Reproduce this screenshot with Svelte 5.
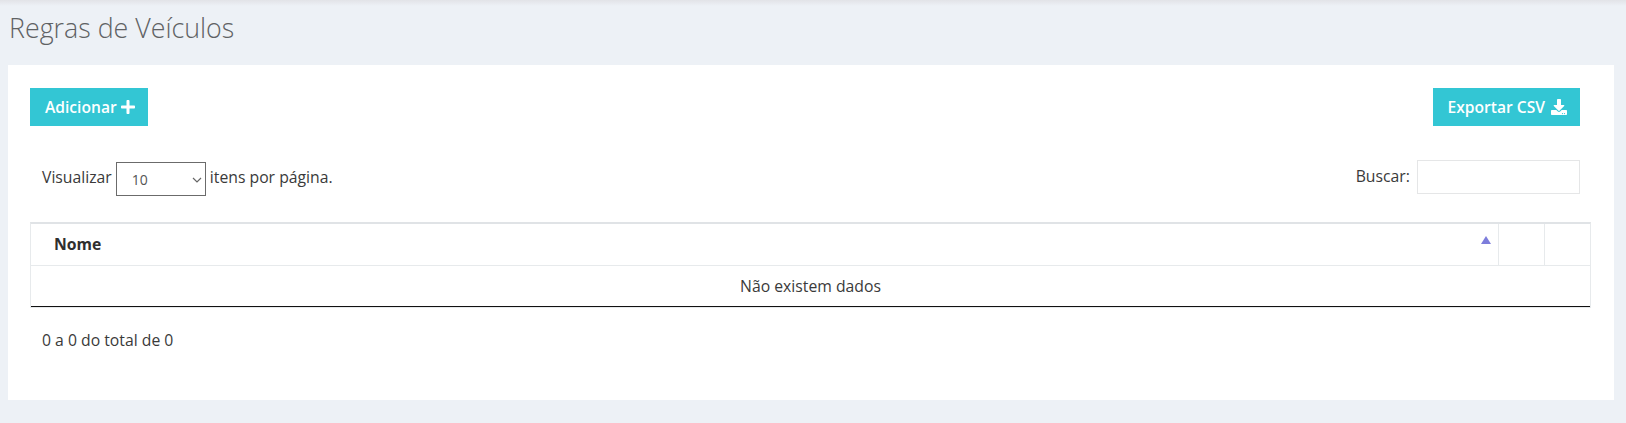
<script>
  let pageSize = $state(10);
  let search = $state("");
</script>

<div class="page">
  <div class="topbar"></div>
  <h1>Regras de Veículos</h1>

  <div class="card">
    <div class="actions">
      <button class="btn">
        Adicionar
        <svg viewBox="0 0 448 512" width="14" height="16"><path fill="currentColor" d="M416 208H272V64c0-17.670-14.330-32-32-32h-32c-17.670 0-32 14.330-32 32v144H32c-17.670 0-32 14.330-32 32v32c0 17.670 14.330 32 32 32h144v144c0 17.670 14.330 32 32 32h32c17.670 0 32-14.330 32-32V304h144c17.670 0 32-14.330 32-32v-32c0-17.670-14.330-32-32-32z"/></svg>
      </button>
      <button class="btn export">
        Exportar CSV
        <svg viewBox="0 0 512 512" width="16" height="16"><path fill="currentColor" d="M216 0h80c13.300 0 24 10.700 24 24v168h87.700c17.800 0 26.700 21.500 14.100 34.100L269.700 378.300c-7.500 7.500-19.800 7.500-27.300 0L90.100 226.100c-12.600-12.600-3.700-34.100 14.100-34.100H192V24c0-13.300 10.700-24 24-24zm296 376v112c0 13.300-10.700 24-24 24H24c-13.300 0-24-10.700-24-24V376c0-13.300 10.700-24 24-24h146.700l49 49c20.100 20.100 52.500 20.100 72.600 0l49-49H488c13.300 0 24 10.700 24 24zm-124 88c0-11-9-20-20-20s-20 9-20 20 9 20 20 20 20-9 20-20zm64 0c0-11-9-20-20-20s-20 9-20 20 9 20 20 20 20-9 20-20z"/></svg>
      </button>
    </div>

    <div class="filters">
      <label class="length">
        Visualizar
        <span class="select-wrap">
          <select bind:value={pageSize}>
            <option value={10}>10</option>
            <option value={25}>25</option>
            <option value={50}>50</option>
          </select>
          <svg class="chevron" viewBox="0 0 10 6" width="10" height="6"><path d="M1 1l4 4 4-4" fill="none" stroke="#666" stroke-width="1.2"/></svg>
        </span>
        itens por página.
      </label>
      <label class="search">
        Buscar:
        <input type="text" bind:value={search} />
      </label>
    </div>

    <table>
      <thead>
        <tr>
          <th class="sorted">Nome</th>
          <th class="narrow"></th>
          <th class="narrow"></th>
        </tr>
      </thead>
      <tbody>
        <tr>
          <td colspan="3">Não existem dados</td>
        </tr>
      </tbody>
    </table>

    <div class="info">0 a 0 do total de 0</div>
  </div>
</div>

<style>
  :global(body) {
    background-color: #edf1f6;
    font-family: "Open Sans", sans-serif;
    color: #3a3a3a;
  }

  .page {
    padding: 0 12px 0 8px;
  }

  .topbar {
    height: 6px;
    margin: 0 -12px 0 -8px;
    background: linear-gradient(#e2e3e7, #edf1f6);
  }

  h1 {
    margin: 0;
    padding: 5px 0 20px 1px;
    height: 34px;
    font-size: 26.8px;
    line-height: 34px;
    font-weight: 300;
    color: #5f6264;
  }

  .card {
    background-color: #fff;
    height: 335px;
    padding: 23px 23px 0 22px;
    box-sizing: border-box;
  }

  .actions {
    display: flex;
    justify-content: space-between;
    padding-right: 11px;
  }

  .btn {
    display: flex;
    align-items: center;
    gap: 4px;
    height: 38px;
    padding: 0 13px 0 15px;
    border: none;
    background-color: #33c6d4;
    color: #fff;
    font-family: inherit;
    font-size: 15.6px;
    font-weight: 600;
  }

  .export {
    gap: 6px;
  }

  .filters {
    display: flex;
    justify-content: space-between;
    align-items: center;
    height: 34px;
    margin-top: 34px;
    padding: 0 11px 0 12px;
    font-size: 15.75px;
  }

  .length {
    display: flex;
    align-items: center;
    gap: 4px;
  }

  .select-wrap {
    position: relative;
    display: block;
    margin-top: 4px;
    height: 34px;
  }

  select {
    display: block;
    width: 90px;
    height: 34px;
    padding: 0 15px;
    border: 1px solid #6b6b6b;
    border-radius: 0;
    appearance: none;
    background-color: #fff;
    color: #555;
    font-family: inherit;
    font-size: 14px;
  }

  .chevron {
    position: absolute;
    top: 15px;
    right: 4px;
    pointer-events: none;
  }

  input {
    width: 163px;
    height: 34px;
    margin-left: 3px;
    border: 1px solid #e5e6e7;
    box-sizing: border-box;
  }

  table {
    width: 100%;
    margin-top: 28px;
    border-collapse: separate;
    border-spacing: 0;
    border: 1px solid #e7eaec;
    border-top: 2px solid #e0e3e6;
    font-size: 15.75px;
  }

  th {
    position: relative;
    height: 42px;
    padding: 0 0 2px 23px;
    box-sizing: border-box;
    border-bottom: 1px solid #e7eaec;
    text-align: left;
    font-weight: 700;
    color: #2f2f2f;
  }

  th.narrow {
    width: 46px;
    padding: 0;
    border-left: 1px solid #e7eaec;
  }

  /* sort arrow */
  th.sorted::after {
    content: "";
    position: absolute;
    top: 12px;
    right: 7px;
    border-left: 5px solid transparent;
    border-right: 5px solid transparent;
    border-bottom: 8px solid #7d7ddb;
  }

  td {
    height: 40px;
    padding: 0;
    text-align: center;
    border-bottom: 1px solid #111;
  }

  .info {
    margin-top: 21px;
    padding-left: 12px;
    font-size: 15.75px;
  }
</style>
